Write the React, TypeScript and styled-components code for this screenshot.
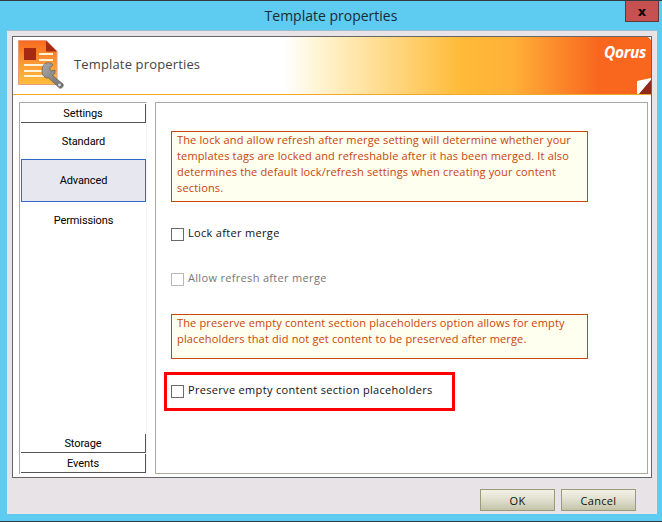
import styled, {createGlobalStyle} from "styled-components";

const GlobalStyle = createGlobalStyle`
    html, body {
        margin: 0;
        padding: 0;
        background: #5ecbf1;
    }
`

const DialogFrame = styled.div`
    position: relative;
    width: 662px;
    height: 522px;
    box-sizing: border-box;
    display: flex;
    flex-direction: column;
    background: #5ecbf1;
    border-top: 1px solid #333a40;
    border-bottom: 1px solid #2c3a44;
    font-family: "Open Sans", "Noto Sans", sans-serif;
    overflow: hidden;
`

const TitleBar = styled.div`
    height: 29px;
    flex: none;
    display: flex;
    align-items: center;
    justify-content: center;
    font-size: 14px;
    color: #1c2a33;
`

const CloseButton = styled.div`
    position: absolute;
    top: -1px;
    left: 625px;
    width: 34px;
    height: 22px;
    box-sizing: border-box;
    display: flex;
    align-items: center;
    justify-content: center;
    background: #c75050;
    border: 1px solid #5b3a3c;
    color: #000;
    font-family: "DejaVu Sans", sans-serif;
    font-size: 13px;
    font-weight: 700;
`

const Client = styled.div`
    flex: none;
    width: 650px;
    height: 484px;
    margin-left: 7px;
    box-sizing: border-box;
    padding: 5px 5px 0;
    display: flex;
    flex-direction: column;
    background: #e7e3e7;
    border-top: 1px solid #9dbcd0;
`

const Panel = styled.div`
    width: 640px;
    height: 442px;
    box-sizing: border-box;
    flex: none;
    display: flex;
    flex-direction: column;
    background: #fff;
    border: 1px solid #666;
`

const Banner = styled.div`
    position: relative;
    height: 58px;
    flex: none;
    box-sizing: border-box;
    display: flex;
    align-items: flex-start;
    gap: 10px;
    padding: 3px 0 0 5px;
    border-bottom: 1px solid #f0a82a;
    background: linear-gradient(90deg, #fff 0, #fff 270px, #fff0c4 318px, #ffbb38 448px, #ffb038 500px, #f9671f 585px, #f9671f 100%);
`

const BannerTitle = styled.div`
    font-size: 13px;
    line-height: 18px;
    letter-spacing: 0.15px;
    color: #444;
    margin-top: 15px;
`

const Brand = styled.div`
    position: absolute;
    top: 4px;
    right: 5px;
    color: #fff;
    font-family: "Open Sans", sans-serif;
    font-size: 15.5px;
    font-weight: 700;
    font-style: italic;
    letter-spacing: -0.3px;
`

const PageCurl = styled.svg`
    position: absolute;
    right: 0;
    bottom: 0;
`

const CornerNick = styled.svg`
    position: absolute;
    top: 0;
    right: 0;
`

const Body = styled.div`
    flex: 1;
    min-height: 0;
    display: flex;
    gap: 8px;
    padding: 7px 3px 3px 6px;
`

const Nav = styled.nav`
    width: 128px;
    flex: none;
    box-sizing: border-box;
    display: flex;
    flex-direction: column;
    padding: 1px 0 1px 1px;
    border-top: 1px solid #a8a8a8;
    border-left: 1px solid #a8a8a8;
    border-right: 1px solid #f4f4f4;
    font-family: Roboto, sans-serif;
    font-size: 11px;
    letter-spacing: -0.1px;
    color: #000;
`

const NavSection = styled.div<{$last?: boolean}>`
    height: 19px;
    flex: none;
    margin-bottom: ${p => p.$last ? 0 : 1}px;
    padding-top: 1px;
    box-sizing: border-box;
    display: flex;
    align-items: center;
    justify-content: center;
    border-right: 1px solid #555;
    border-bottom: 1px solid #555;
`

const NavItem = styled.div<{$active?: boolean}>`
    height: ${p => p.$active ? 43 : 36}px;
    flex: none;
    box-sizing: border-box;
    display: flex;
    align-items: center;
    justify-content: center;
    background: ${p => p.$active ? "#e6e7ef" : "transparent"};
    border: ${p => p.$active ? "1px solid #3169c6" : "none"};
`

const NavSpacer = styled.div`
    flex: 1;
`

const Content = styled.div`
    flex: 1;
    min-width: 0;
    box-sizing: border-box;
    display: flex;
    flex-direction: column;
    align-items: flex-start;
    padding: 28px 0 0 15px;
    border: 1px solid #aaa99a;
    border-top-color: #a8a8a8;
`

const Notice = styled.div<{$height: number; $after: number}>`
    width: 417px;
    height: ${p => p.$height}px;
    margin-bottom: ${p => p.$after}px;
    box-sizing: border-box;
    padding: 0 0 0 5px;
    border: 1px solid #c8470c;
    background: #fffff0;
    color: #c8440a;
    font-size: 11px;
    line-height: 16px;
    letter-spacing: 0.15px;
    white-space: nowrap;
`

const CheckRow = styled.label<{$disabled?: boolean; $after?: number}>`
    display: flex;
    align-items: flex-start;
    gap: 4px;
    margin-bottom: ${p => p.$after ?? 0}px;
    font-size: 11px;
    line-height: 13px;
    letter-spacing: 0.32px;
    color: ${p => p.$disabled ? "#777" : "#111"};
`

const CheckBox = styled.span<{$disabled?: boolean}>`
    width: 13px;
    height: 13px;
    flex: none;
    box-sizing: border-box;
    background: #fff;
    border: 1px solid ${p => p.$disabled ? "#b8b8b8" : "#6a6a6a"};
`

const CheckLabel = styled.span`
    margin-top: -2px;
`

const Highlight = styled.div`
    width: 291px;
    height: 39px;
    margin: 13px 0 0 -7px;
    box-sizing: border-box;
    padding: 10px 0 0 4px;
    border: 3px solid #f00;
`

const Footer = styled.div`
    flex: 1;
    display: flex;
    justify-content: flex-end;
    align-items: flex-start;
    gap: 6px;
    padding: 11px 16px 0 0;
`

const DialogButton = styled.button`
    width: 75px;
    height: 22px;
    padding: 0;
    box-sizing: border-box;
    border: 1px solid #9c9a78;
    border-radius: 0;
    background: linear-gradient(180deg, #f2f1e6 0%, #e2e1d0 45%, #c4c3a9 100%);
    color: #111;
    font-family: inherit;
    font-size: 11px;
    letter-spacing: 0.3px;
`

function TemplateIcon() {
    return (
        <svg width="46" height="50" viewBox="0 0 46 50">
            <defs>
                <linearGradient id="sheet" x1="0" y1="0" x2="0" y2="1">
                    <stop offset="0" stopColor="#f86a20"/>
                    <stop offset="0.55" stopColor="#fd9a35"/>
                    <stop offset="1" stopColor="#ffbd3c"/>
                </linearGradient>
                <linearGradient id="wrench" x1="0" y1="0" x2="1" y2="1">
                    <stop offset="0" stopColor="#a8a8a8"/>
                    <stop offset="1" stopColor="#6e6e6e"/>
                </linearGradient>
            </defs>
            <path d="M0.5 0.5H28L39 11.5V44.5H0.5Z" fill="url(#sheet)" stroke="#e89a80"/>
            <path d="M28 0.5L39 11.5H28Z" fill="#a52a14"/>
            <rect x="6" y="8" width="12" height="12" fill="#a62a12"/>
            <g fill="#fff3d8">
                <rect x="21" y="13" width="14" height="2"/>
                <rect x="21" y="19" width="14" height="2"/>
                <rect x="6" y="24" width="24" height="2"/>
                <rect x="6" y="30" width="18" height="2"/>
                <rect x="6" y="35" width="20" height="2"/>
            </g>
            <path d="M27 23.5C30 22 33.5 22.5 35 25L31.5 28L33 31L37 30C37.5 32.5 36.5 34.5 34.5 35.5L45 44C46 46 44 49 41.5 48L30.5 38C27 38.5 24 35.5 24 31C24 28 25 25 27 23.5Z" fill="url(#wrench)" stroke="#5e5e5e" strokeWidth="0.7"/>
            <circle cx="41.5" cy="45" r="1.4" fill="#d8d8d8"/>
        </svg>
    )
}

export default function App() {
    return (
        <>
            <GlobalStyle/>
            <DialogFrame>
                <TitleBar>Template properties</TitleBar>
                <CloseButton>x</CloseButton>
                <Client>
                    <Panel>
                        <Banner>
                            <TemplateIcon/>
                            <BannerTitle>Template properties</BannerTitle>
                            <Brand>Qorus</Brand>
                            <CornerNick width="3" height="3" viewBox="0 0 3 3">
                                <path d="M0 0H3V3Z" fill="#fff"/>
                            </CornerNick>
                            <PageCurl width="14" height="16" viewBox="0 0 14 16">
                                <path d="M14 0V2L2 16H0V3Z" fill="#fff"/>
                                <path d="M14 2V16H2Z" fill="#8e2a18"/>
                            </PageCurl>
                        </Banner>
                        <Body>
                            <Nav>
                                <NavSection $last>Settings</NavSection>
                                <NavItem>Standard</NavItem>
                                <NavItem $active>Advanced</NavItem>
                                <NavItem>Permissions</NavItem>
                                <NavSpacer/>
                                <NavSection>Storage</NavSection>
                                <NavSection $last>Events</NavSection>
                            </Nav>
                            <Content>
                                <Notice $height={71} $after={26}>
                                    The lock and allow refresh after merge setting will determine whether your<br/>
                                    templates tags are locked and refreshable after it has been merged. It also<br/>
                                    determines the default lock/refresh settings when creating your content<br/>
                                    sections.
                                </Notice>
                                <CheckRow $after={32}>
                                    <CheckBox/>
                                    <CheckLabel>Lock after merge</CheckLabel>
                                </CheckRow>
                                <CheckRow $disabled $after={28}>
                                    <CheckBox $disabled/>
                                    <CheckLabel>Allow refresh after merge</CheckLabel>
                                </CheckRow>
                                <Notice $height={45} $after={0}>
                                    The preserve empty content section placeholders option allows for empty<br/>
                                    placeholders that did not get content to be preserved after merge.
                                </Notice>
                                <Highlight>
                                    <CheckRow>
                                        <CheckBox/>
                                        <CheckLabel>Preserve empty content section placeholders</CheckLabel>
                                    </CheckRow>
                                </Highlight>
                            </Content>
                        </Body>
                    </Panel>
                    <Footer>
                        <DialogButton>OK</DialogButton>
                        <DialogButton>Cancel</DialogButton>
                    </Footer>
                </Client>
            </DialogFrame>
        </>
    )
}
